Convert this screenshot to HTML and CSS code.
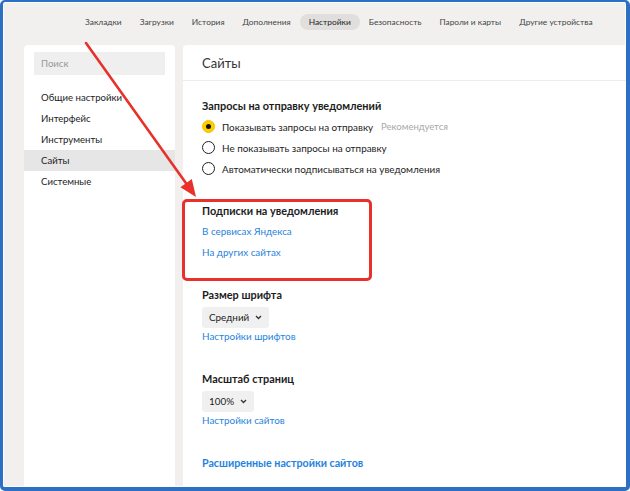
FILE: index.html
```html
<!DOCTYPE html>
<html lang="ru">
<head>
<meta charset="utf-8">
<link rel="stylesheet" href="styles.css">
</head>
<body>
<div class="frame">
  <nav class="topnav">
    <span class="nav-item">Закладки</span>
    <span class="nav-item">Загрузки</span>
    <span class="nav-item">История</span>
    <span class="nav-item">Дополнения</span>
    <span class="nav-item active">Настройки</span>
    <span class="nav-item">Безопасность</span>
    <span class="nav-item">Пароли и карты</span>
    <span class="nav-item">Другие устройства</span>
  </nav>
  <div class="main">
    <aside class="sidebar">
      <div class="search">Поиск</div>
      <ul class="menu">
        <li>Общие настройки</li>
        <li>Интерфейс</li>
        <li>Инструменты</li>
        <li class="selected">Сайты</li>
        <li>Системные</li>
      </ul>
    </aside>
    <section class="content">
      <h1 class="title">Сайты</h1>
      <div class="body">
        <div class="group">
          <div class="group-title">Запросы на отправку уведомлений</div>
          <label class="radio-row"><span class="radio checked"></span>Показывать запросы на отправку<span class="hint">Рекомендуется</span></label>
          <label class="radio-row"><span class="radio"></span>Не показывать запросы на отправку</label>
          <label class="radio-row"><span class="radio"></span>Автоматически подписываться на уведомления</label>
        </div>
        <div class="group highlighted">
          <div class="group-title">Подписки на уведомления</div>
          <a class="link">В сервисах Яндекса</a>
          <a class="link">На других сайтах</a>
        </div>
        <div class="group">
          <div class="group-title">Размер шрифта</div>
          <div class="select-row"><span class="select">Средний<svg class="chev" width="7" height="5" viewBox="0 0 7 5"><path d="M1 1l2.5 2.5L6 1" fill="none" stroke="#333" stroke-width="1.3"/></svg></span></div>
          <a class="link">Настройки шрифтов</a>
        </div>
        <div class="group">
          <div class="group-title">Масштаб страниц</div>
          <div class="select-row"><span class="select">100%<svg class="chev" width="7" height="5" viewBox="0 0 7 5"><path d="M1 1l2.5 2.5L6 1" fill="none" stroke="#333" stroke-width="1.3"/></svg></span></div>
          <a class="link">Настройки сайтов</a>
        </div>
        <div class="group">
          <a class="link strong">Расширенные настройки сайтов</a>
        </div>
      </div>
    </section>
  </div>
  <svg class="arrow" width="630" height="491" viewBox="0 0 630 491">
    <line x1="86" y1="43" x2="188" y2="186" stroke="#e8312a" stroke-width="2.6" stroke-linecap="round"/>
    <polygon points="196,197 180.4,187.3 191.8,179.1" fill="#e8312a"/>
  </svg>
</div>
</body>
</html>
```

FILE: styles.css
```css
* { box-sizing: border-box; }
html, body { margin: 0; padding: 0; }
body {
  width: 630px;
  height: 491px;
  overflow: hidden;
  font-family: Lato, "Liberation Sans", sans-serif;
  color: #1c1c1c;
}
.frame {
  position: relative;
  width: 630px;
  height: 491px;
  border-style: solid;
  border-color: #2d6fc2;
  border-width: 2px 4px 4px 3px;
  border-radius: 5px;
  background: #f1f0ef;
  box-shadow: inset 0 0 0 1px #ffffff;
  overflow: hidden;
  display: flex;
  flex-direction: column;
}
.topnav {
  height: 40px;
  display: flex;
  align-items: center;
  padding-left: 73px;
  font-size: 8.4px;
  color: #444;
}
.nav-item {
  padding: 0 9px;
  line-height: 16px;
  height: 16px;
  border-radius: 8px;
  white-space: nowrap;
}
.nav-item.active {
  background: #e0dfde;
  color: #222;
}
.main {
  flex: 1;
  display: flex;
  gap: 8px;
  padding: 3px 0 0 21px;
  min-height: 0;
}
.sidebar {
  width: 151px;
  background: #fff;
  border-radius: 4px 4px 0 0;
  padding-top: 7px;
}
.search {
  margin: 0 10px;
  height: 23px;
  background: #efefef;
  color: #999;
  font-size: 9.6px;
  line-height: 23px;
  padding-left: 7px;
}
.menu {
  list-style: none;
  margin: 12px 0 0;
  padding: 0;
}
.menu li {
  height: 21px;
  line-height: 21px;
  font-size: 9.6px;
  padding-left: 17px;
  white-space: nowrap;
}
.menu li.selected { background: #e6e6e6; }
.content {
  flex: 1;
  background: #fff;
  border-radius: 4px 0 0 0;
}
.title {
  margin: 0;
  height: 36px;
  line-height: 37px;
  font-size: 13px;
  font-weight: 400;
  padding-left: 19px;
  border-bottom: 1px solid #ececec;
  color: #333;
}
.body {
  padding: 14px 0 0 19px;
  display: flex;
  flex-direction: column;
  gap: 21px;
}
.group {
  display: flex;
  flex-direction: column;
  align-items: flex-start;
}
.group-title {
  font-weight: 700;
  font-size: 10.9px;
  line-height: 21px;
  height: 21px;
}
.radio-row {
  display: flex;
  align-items: center;
  height: 21px;
  font-size: 9.9px;
  white-space: nowrap;
}
.radio {
  width: 13px;
  height: 13px;
  border-radius: 50%;
  border: 1.5px solid #222;
  margin-right: 7px;
  flex: none;
  position: relative;
}
.radio.checked {
  background: #ffcc00;
  border-color: #f4c000;
}
.radio.checked::after {
  content: "";
  position: absolute;
  left: 2.5px;
  top: 2.5px;
  width: 5px;
  height: 5px;
  border-radius: 50%;
  background: #111;
}
.hint {
  color: #a8a8a8;
  margin-left: 8px;
  font-size: 9.5px;
}
.link {
  color: #1f83dd;
  font-size: 9.9px;
  line-height: 21px;
  height: 21px;
  white-space: nowrap;
  cursor: pointer;
}
.link.strong { font-weight: 700; font-size: 10.7px; }
.select-row { height: 21px; }
.select {
  display: inline-flex;
  align-items: center;
  gap: 6px;
  height: 21px;
  padding: 0 7px;
  background: #f0f0f0;
  border-radius: 3px;
  font-size: 9.9px;
}
.chev { display: block; }
.highlighted { position: relative; }
.highlighted::after {
  content: "";
  position: absolute;
  left: -20px;
  top: -1px;
  width: 184px;
  height: 76px;
  border: 3px solid #e8312a;
  border-radius: 5px;
}
.arrow {
  position: absolute;
  left: -3px;
  top: -2px;
  pointer-events: none;
}
```
